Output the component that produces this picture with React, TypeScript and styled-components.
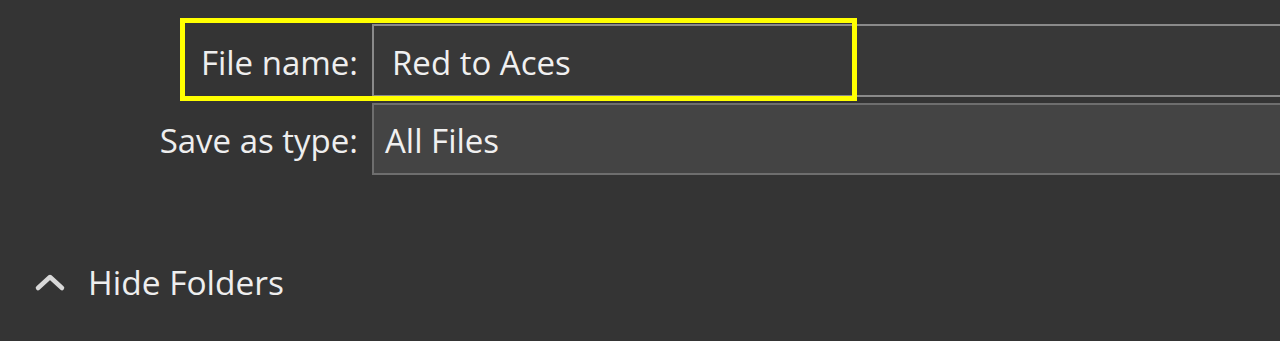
import React from "react";
import styled, { createGlobalStyle } from "styled-components";

const Global = createGlobalStyle`
  html, body {
    margin: 0;
    padding: 0;
    background: #343434;
    overflow: hidden;
  }
  body {
    font-family: "Open Sans", "Noto Sans", sans-serif;
    color: #eeeeee;
  }
`;

const Page = styled.div`
  width: 1280px;
  height: 341px;
  background: #343434;
  display: flex;
  flex-direction: column;
  padding-top: 24px;
  box-sizing: border-box;
  overflow: hidden;
`;

const Form = styled.div`
  display: grid;
  grid-template-columns: 372px 940px;
  grid-auto-rows: auto;
  row-gap: 6px;
  position: relative;
`;

const Label = styled.label`
  display: flex;
  align-items: center;
  justify-content: flex-end;
  padding-right: 14px;
  padding-top: 3px;
  font-size: 33px;
  line-height: 1;
  color: #eeeeee;
  white-space: nowrap;
`;

const Field = styled.div<{ $variant: "text" | "combo" }>`
  box-sizing: border-box;
  height: ${(p) => (p.$variant === "text" ? "73px" : "72px")};
  border: 2px solid ${(p) => (p.$variant === "text" ? "#8a8a8a" : "#6e6e6e")};
  background: ${(p) => (p.$variant === "text" ? "#383838" : "#444444")};
  display: flex;
  align-items: center;
  padding-left: ${(p) => (p.$variant === "text" ? "18px" : "11px")};
  padding-top: 3px;
  font-size: 33px;
  line-height: 1;
  color: #f0f0f0;
  white-space: nowrap;
`;

const Highlight = styled.div`
  position: absolute;
  left: 180px;
  top: -6px;
  width: 677px;
  height: 83px;
  box-sizing: border-box;
  border: 5px solid #ffff00;
  pointer-events: none;
`;

const Toggle = styled.button`
  margin-top: 91px;
  margin-left: 34px;
  display: flex;
  align-items: center;
  gap: 22px;
  background: none;
  border: none;
  padding: 0;
  font-family: inherit;
  font-size: 33.5px;
  line-height: 1;
  color: #eeeeee;
  cursor: pointer;
  align-self: flex-start;
`;

const Chevron = () => (
  <svg width="32" height="20" viewBox="0 0 32 20">
    <path
      d="M4 15 L16 4 L28 15"
      fill="none"
      stroke="#d8d8d8"
      strokeWidth="4.5"
      strokeLinecap="round"
      strokeLinejoin="round"
    />
  </svg>
);

export default function App() {
  return (
    <>
      <Global />
      <Page>
        <Form>
          <Label>File name:</Label>
          <Field $variant="text">Red to Aces</Field>
          <Label>Save as type:</Label>
          <Field $variant="combo">All Files</Field>
          <Highlight />
        </Form>
        <Toggle>
          <Chevron />
          Hide Folders
        </Toggle>
      </Page>
    </>
  );
}
